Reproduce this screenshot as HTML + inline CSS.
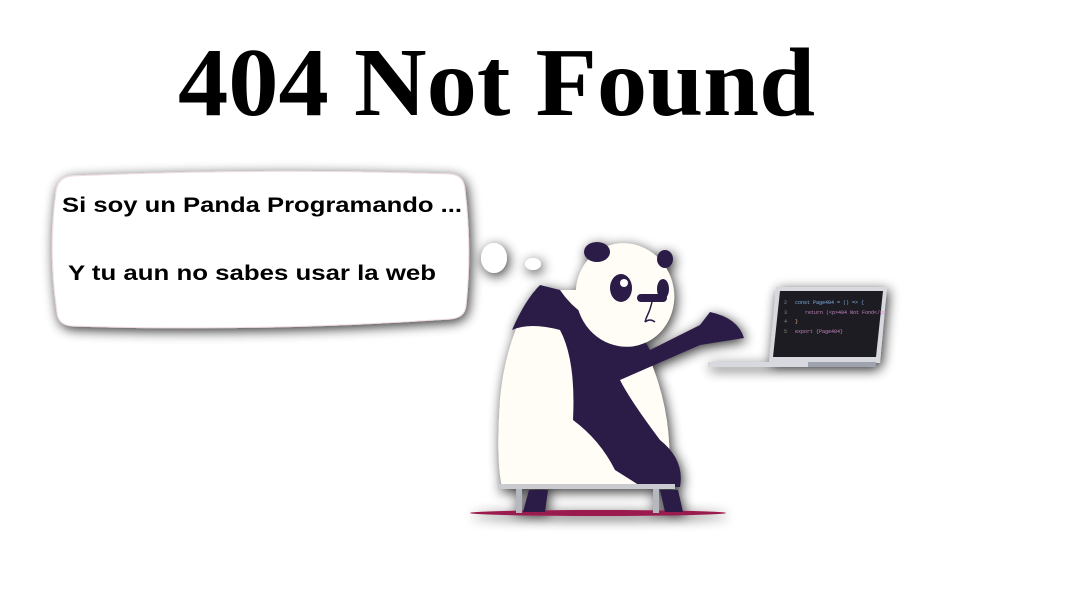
<!DOCTYPE html>
<html><head><meta charset="utf-8"><style>
html,body{margin:0;padding:0;background:#fff;width:1080px;height:608px;overflow:hidden}
</style></head><body>
<svg width="1080" height="608" viewBox="0 0 1080 608" xmlns="http://www.w3.org/2000/svg">
<defs>
<filter id="sh" x="-20%" y="-20%" width="140%" height="140%"><feGaussianBlur in="SourceAlpha" stdDeviation="6"/><feOffset dx="2" dy="3"/><feComponentTransfer><feFuncA type="linear" slope="0.8"/></feComponentTransfer><feMerge><feMergeNode/><feMergeNode in="SourceGraphic"/></feMerge></filter>
</defs>
<text x="178" y="115" font-family="Liberation Serif, serif" font-weight="bold" font-size="98" textLength="637" lengthAdjust="spacingAndGlyphs">404 Not Found</text>

<g filter="url(#sh)">
<path d="M72 176 Q260 168 450 174 Q464 175 465 190 Q472 250 466 305 Q465 318 450 319 Q260 332 72 326 Q58 325 57 312 Q48 250 56 192 Q58 177 72 176 Z" fill="#fff" stroke="#f2dde3" stroke-width="1"/>
<ellipse cx="494" cy="258" rx="13" ry="15" fill="#fff"/>
<ellipse cx="533" cy="264" rx="8" ry="6" fill="#fff"/>
</g>
<text x="62" y="212" font-family="Liberation Sans, sans-serif" font-weight="bold" font-size="21" textLength="400" lengthAdjust="spacingAndGlyphs">Si soy un Panda Programando ...</text>
<text x="68" y="280" font-family="Liberation Sans, sans-serif" font-weight="bold" font-size="21" textLength="368" lengthAdjust="spacingAndGlyphs">Y tu aun no sabes usar la web</text>

<g filter="url(#sh)">
<path d="M776 287 L887 287 L880 363 L769 363 Z" fill="#d7d9de"/>
<path d="M780 291 L883 291 L876 357 L773 357 Z" fill="#1e1e22"/>
<rect x="708" y="362" width="168" height="5" fill="#d7d9de"/>
<rect x="808" y="362" width="68" height="5" fill="#9ea3ad"/>
</g>
<g font-family="Liberation Mono, monospace" font-size="5">
<text x="784" y="304" fill="#888">2</text><text x="795" y="304" fill="#7fb0e8">const Page404 = () =&gt; {</text>
<text x="784" y="314" fill="#888">3</text><text x="805" y="314" fill="#c586c0">return (&lt;p&gt;404 Not Fond&lt;/p&gt;)</text>
<text x="784" y="323" fill="#888">4</text><text x="795" y="323" fill="#e5c07b">}</text>
<text x="784" y="333" fill="#888">5</text><text x="795" y="333" fill="#c586c0">export {Page404}</text>
</g>

<g filter="url(#sh)">
<ellipse cx="598" cy="513" rx="128" ry="3" fill="#9a1f4f"/>
<path d="M535 290 Q505 340 500 400 Q496 460 502 487 L668 487 Q675 420 650 360 Q630 310 600 290 Z" fill="#fffdf5"/>
<path d="M540 285 Q525 300 512 330 Q530 322 560 330 Q576 360 573 420 Q600 440 615 470 L642 487 L680 487 Q685 460 660 440 Q630 400 620 380 L700 345 L744 338 Q738 318 710 312 L700 325 L650 350 Q640 330 620 330 Q580 320 560 290 Z" fill="#2b1a47"/>
<path d="M615 460 Q640 455 668 470 L680 487 L640 487 Z" fill="#2b1a47"/>
<path d="M529 490 L548 490 L545 512 L523 512 Z" fill="#2b1a47"/>
<path d="M660 490 L678 490 L683 512 L665 512 Z" fill="#2b1a47"/>
<ellipse cx="625" cy="295" rx="49" ry="52" fill="#fffdf5" transform="rotate(-15 625 295)"/>
<ellipse cx="597" cy="252" rx="13" ry="10" fill="#2b1a47"/>
<ellipse cx="665" cy="259" rx="8" ry="9" fill="#2b1a47"/>
<ellipse cx="621" cy="288" rx="11" ry="14" fill="#2b1a47"/>
<circle cx="624" cy="283" r="4" fill="#fff"/>
<ellipse cx="663" cy="289" rx="6" ry="10" fill="#2b1a47"/>
<rect x="637" y="294" width="30" height="8" rx="4" fill="#2b1a47"/>
<path d="M652 302 Q650 310 648 314 Q646 318 645 322 M645 322 Q650 318 655 322" stroke="#2b1a47" stroke-width="1.5" fill="none"/>
<rect x="498" y="484" width="177" height="5" fill="#c9cbd1"/>
<rect x="516" y="489" width="6" height="24" fill="#b5b8bf"/>
<rect x="653" y="489" width="6" height="24" fill="#b5b8bf"/>
</g>
</svg>
</body></html>
